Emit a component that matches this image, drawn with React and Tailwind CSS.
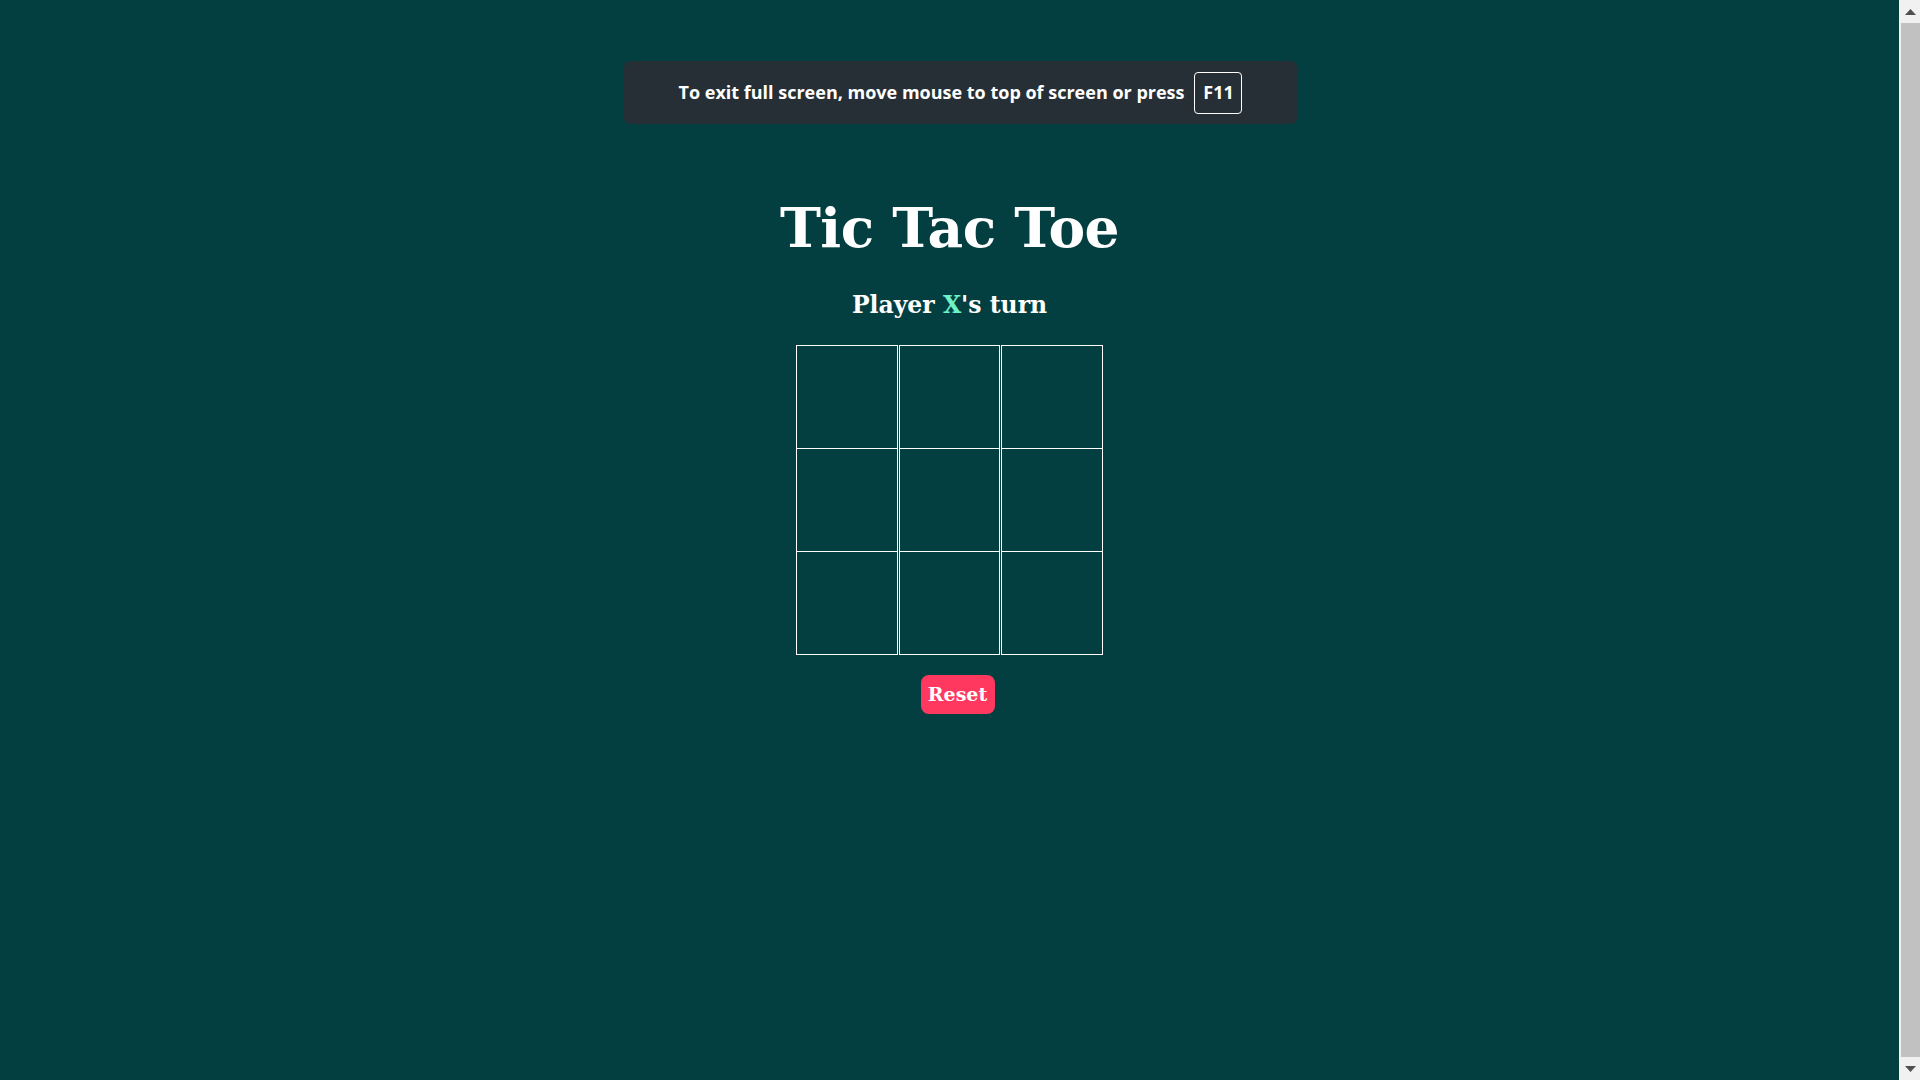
export default function App() {
  const cells = Array.from({ length: 9 });

  return (
    <div className="relative flex h-screen overflow-hidden bg-[#033f40] font-['DejaVu_Serif',serif] text-white">
      <div className="flex flex-1 flex-col items-center pt-[193px]">
        <h1 className="text-[55px] font-bold leading-[70px] tracking-[-0.5px]">Tic Tac Toe</h1>
        <h2 className="mt-[27px] text-[23.5px] font-bold leading-[30px]">
          Player <span className="text-[#6ff2c6]">X</span>'s turn
        </h2>

        <div className="mt-[25px] grid grid-cols-[102px_101px_102px] gap-x-px">
          {cells.map((_, i) => (
            <button
              key={i}
              className={
                'h-[104px] border border-white bg-transparent ' + (i > 2 ? '-mt-px' : '')
              }
            />
          ))}
        </div>

        <button className="ml-[16px] mt-[20px] h-[39px] w-[74px] rounded-lg bg-[#ff3860] text-[19px] font-bold text-white">
          Reset
        </button>
      </div>

      {/* scrollbar */}
      <div className="flex w-[21px] flex-col bg-[#f1f1f1]">
        <div className="flex h-[23px] items-center justify-center pl-[2px]">
          <svg width="11" height="6" viewBox="0 0 11 6">
            <path d="M5.5 0L11 6H0z" fill="#505050" />
          </svg>
        </div>
        <div className="ml-[2px] flex-1 bg-[#c1c1c1]" />
        <div className="flex h-[23px] items-center justify-center pl-[2px]">
          <svg width="11" height="6" viewBox="0 0 11 6">
            <path d="M0 0H11L5.5 6z" fill="#505050" />
          </svg>
        </div>
      </div>

      {/* browser full screen notice */}
      <div className="absolute left-[624px] top-[61px] flex h-[63px] w-[673px] items-center justify-center gap-[10px] rounded-md bg-[#252f35] font-['Open_Sans',sans-serif]">
        <span className="text-[18px] font-bold">
          To exit full screen, move mouse to top of screen or press
        </span>
        <span className="flex h-[42px] w-[48px] items-center justify-center rounded border border-white text-[18px] font-bold">
          F11
        </span>
      </div>
    </div>
  );
}
